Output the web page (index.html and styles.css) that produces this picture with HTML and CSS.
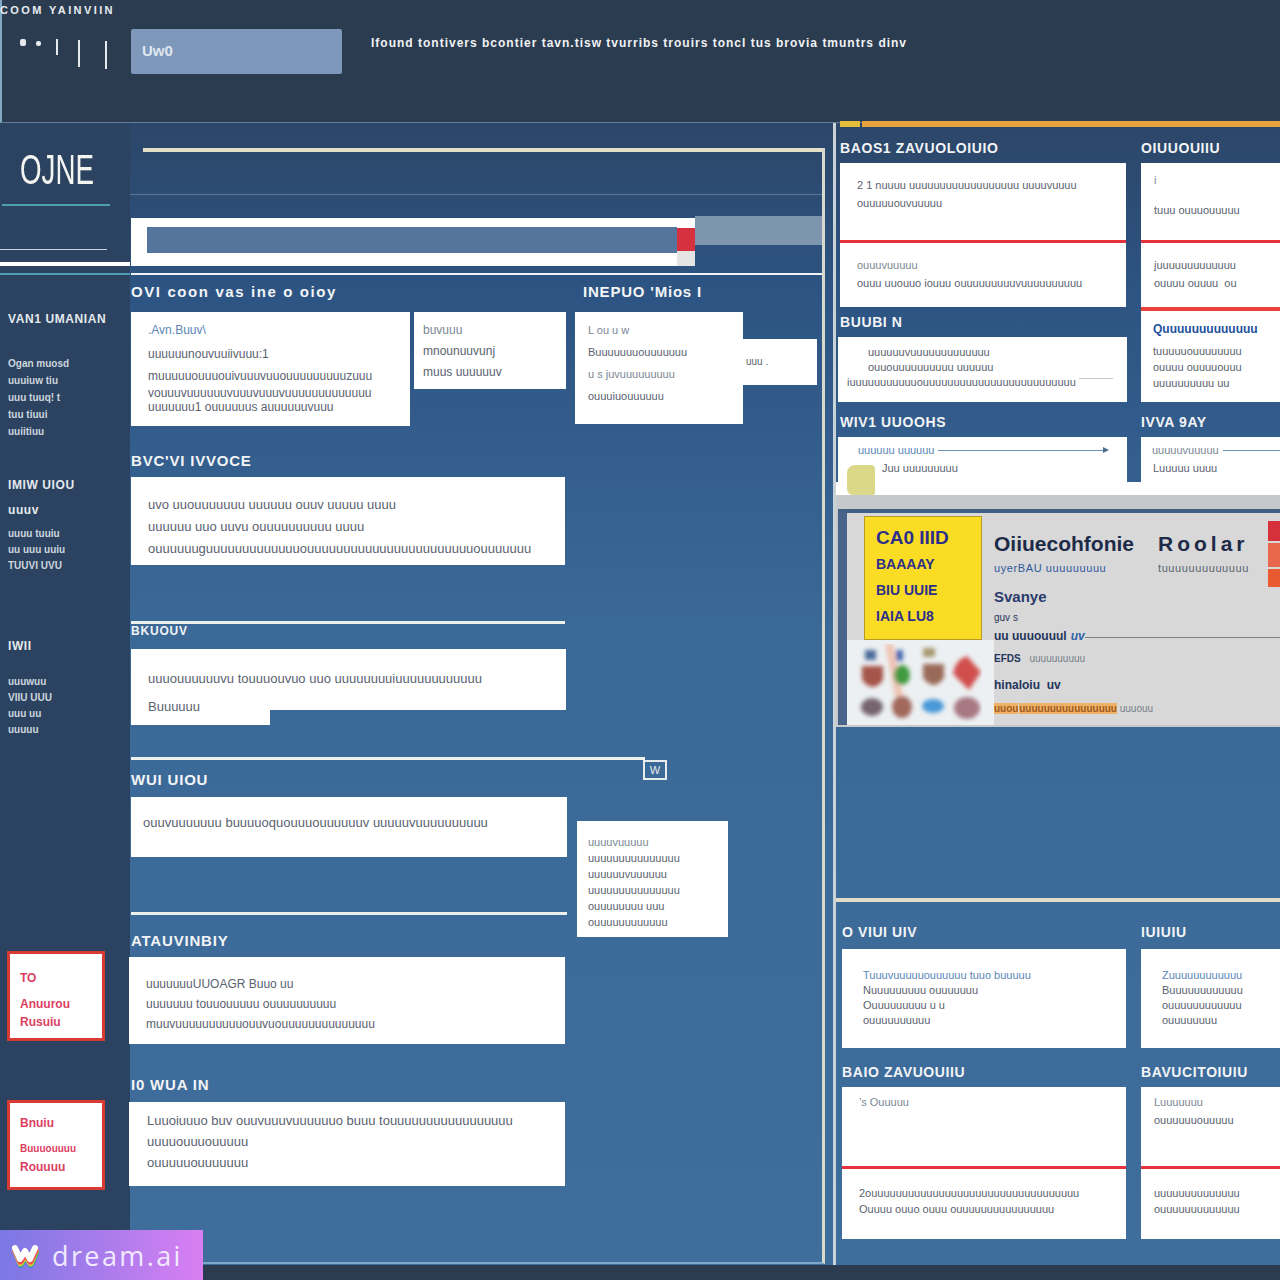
FILE: index.html
```html
<!doctype html>
<html>
<head>
	<title>OJNE</title>
	<meta charset="utf-8">
	<link rel="stylesheet" href="styles.css">
</head>
<body>
<div class="page">

	<div class="header">
		<div class="top_title">COOM YAINVIIN</div>
		<div class="header_row">
			<div class="ticks">
				<span class="dot"></span><span class="dot d2"></span><span class="tick tk1"></span><span class="tick tk2"></span><span class="tick tk3"></span>
			</div>
			<div class="search">Uw0</div>
			<div class="top_nav">Ifound tontivers bcontier tavn.tisw tvurribs trouirs toncl tus brovia tmuntrs dinv</div>
		</div>
	</div>

	<div class="content">

		<!-- left column -->
		<div class="side">
			<div class="logo">OJNE</div>
			<div class="s_rule teal first"></div>
			<div class="s_rule thin"></div>
			<div class="s_rule white"></div>
			<div class="s_rule teal last"></div>

			<div class="s_head sh1">VAN1 UMANIAN</div>
			<ul class="s_list l1">
				<li>Ogan muosd</li>
				<li>uuuiuw tiu</li>
				<li>uuu tuuq! t</li>
				<li>tuu tiuui</li>
				<li>uuiitiuu</li>
			</ul>

			<div class="s_head sh2">IMIW UIOU</div>
			<div class="s_head sh3">uuuv</div>
			<ul class="s_list l2">
				<li>uuuu tuuiu</li>
				<li>uu uuu uuiu</li>
				<li>TUUVI UVU</li>
			</ul>

			<div class="s_head sh4">IWII</div>
			<ul class="s_list l3">
				<li>uuuwuu</li>
				<li>VIIU UUU</li>
				<li>uuu uu</li>
				<li>uuuuu</li>
			</ul>

			<div class="red_box box1">
				<b class="big">TO</b>
				<b>Anuurou</b>
				<b>Rusuiu</b>
			</div>
			<div class="red_box box2">
				<b class="big">Bnuiu</b>
				<b class="sm">Buuuouuuu</b>
				<b>Rouuuu</b>
			</div>
		</div>

		<!-- middle column -->
		<div class="frame">
			<div class="rule_cream"></div>
			<div class="rule_thin"></div>
			<div class="bar_row">
				<div class="bar">
					<div class="bar_fill"></div>
					<div class="bar_tag"></div>
				</div>
				<div class="bar_gray"></div>
			</div>
			<div class="rule_white"></div>

			<div class="sec_head two">
				<span class="h_left">OVI coon vas ine o oioy</span>
				<span>INEPUO 'Mios I</span>
			</div>
			<div class="row">
				<div class="card c11">
					<p class="blue">.Avn.Buuv\</p>
					<p>uuuuuunouvuuiivuuu:1</p>
					<p>muuuuuouuuouivuuuvuuouuuuuuuuuzuuu</p>
					<p>vouuuvuuuuuuvuuuvuuuvuuuuuuuuuuuuu</p>
					<p>uuuuuuu1 ouuuuuus auuuuuuvuuu</p>
				</div>
				<div class="card c12">
					<p class="soft">buvuuu</p>
					<p>mnounuuvunj</p>
					<p>muus uuuuuuv</p>
				</div>
				<div class="card c13">
					<p class="soft">L ou u w</p>
					<p>Buuuuuuuouuuuuuu</p>
					<p class="soft">u s juvuuuuuuuuu</p>
					<p>ouuuiuouuuuuu</p>
				</div>
				<div class="card c14"><p>uuu .</p></div>
			</div>

			<div class="sec_head s2">BVC'VI IVVOCE</div>
			<div class="card c2">
				<p>uvo uuouuuuuuu uuuuuu ouuv uuuuu uuuu</p>
				<p>uuuuuu uuo uuvu ouuuuuuuuuu uuuu</p>
				<p>ouuuuuuguuuuuuuuuuuuuouuuuuuuuuuuuuuuuuuuuuuuouuuuuuu</p>
			</div>

			<div class="rule_short r3"></div>
			<div class="sec_head s3">BKUOUV</div>
			<div class="card c3">
				<p>uuuouuuuuuvu touuuouvuo uuo uuuuuuuuiuuuuuuuuuuuu</p>
				<p>Buuuuuu</p>
			</div>
			<div class="card_tab"></div>

			<div class="rule_box">
				<div class="rule_long"></div>
				<div class="mini_box">W</div>
			</div>
			<div class="sec_head s4">WUI UIOU</div>
			<div class="row flat">
				<div class="card c4">
					<p>ouuvuuuuuuu buuuuoquouuuouuuuuuv uuuuuvuuuuuuuuuu</p>
				</div>
				<div class="card c45">
					<p class="soft">uuuuvuuuuu</p>
					<p>uuuuuuuuuuuuuuu</p>
					<p>uuuuuuvuuuuuu</p>
					<p>uuuuuuuuuuuuuuu</p>
					<p>ouuuuuuuu uuu</p>
					<p>ouuuuuuuuuuuu</p>
				</div>
			</div>

			<div class="rule_short r5"></div>
			<div class="sec_head s5">ATAUVINBIY</div>
			<div class="card c5">
				<p>uuuuuuuUUOAGR Buuo uu</p>
				<p>uuuuuuu touuouuuuu ouuuuuuuuuu</p>
				<p>muuvuuuuuuuuuuouuvuouuuuuuuuuuuuuu</p>
			</div>

			<div class="sec_head s6">I0 WUA IN</div>
			<div class="card c6">
				<p>Luuoiuuuo buv ouuvuuuvuuuuuuo buuu touuuuuuuuuuuuuuuuu</p>
				<p>uuuuouuuouuuuu</p>
				<p>ouuuuuouuuuuuu</p>
			</div>
		</div>

		<!-- right column -->
		<div class="right">
			<div class="orange"><span class="orange_a"></span><span class="orange_b"></span></div>
			<div class="r_top">
				<div class="r_col">
					<div class="r_head">BAOS1 ZAVUOLOIUIO</div>
					<div class="rcard split">
						<div class="half hf_top">
							<p>2 1 nuuuu uuuuuuuuuuuuuuuuuu uuuuvuuuu</p>
							<p>ouuuuuouvuuuuu</p>
						</div>
						<div class="half hf_bot">
							<p class="soft">ouuuvuuuuu</p>
							<p>ouuu uuouuo iouuu ouuuuuuuuuvuuuuuuuuuu</p>
						</div>
					</div>
					<div class="r_head gap1">BUUBI N</div>
					<div class="rcard wide h65">
						<p class="ind">uuuuuuvuuuuuuuuuuuuu</p>
						<p class="ind">ouuouuuuuuuuuu uuuuuu</p>
						<p>iuuuuuuuuuuuouuuuuuuuuuuuuuuuuuuuuuuuu <i class="faint"></i></p>
					</div>
					<div class="r_head gap2">WIV1 UUOOHS</div>
					<div class="rcard wide short">
						<div class="arrow_line"><span class="blue">uuuuuu uuuuuu</span><i></i></div>
						<p class="ind">Juu uuuuuuuuu</p>
					</div>
				</div>
				<div class="r_col">
					<div class="r_head">OIUUOUIIU</div>
					<div class="rcard split thick">
						<div class="half hf_top nar">
							<p class="soft">i</p>
							<p>tuuu ouuuouuuuu</p>
						</div>
						<div class="half hf_bot nar">
							<p>juuuuuuuuuuuuu</p>
							<p>ouuuu ouuuu &nbsp;ou</p>
						</div>
					</div>
					<div class="rcard h91">
						<p class="navy">Quuuuuuuuuuuuu</p>
						<p>tuuuuuouuuuuuuu</p>
						<p>ouuuu ouuuuouuu</p>
						<p>uuuuuuuuuu uu</p>
					</div>
					<div class="r_head gap3">IVVA 9AY</div>
					<div class="rcard short">
						<div class="arrow_line lb"><span class="soft">uuuuuvuuuuu</span><i></i></div>
						<p>Luuuuu uuuu</p>
					</div>
				</div>
			</div>

			<div class="sticky"></div>
			<div class="band"></div>

			<div class="panel">
				<div class="panel_in">
					<div class="panel_left">
						<div class="yellow">
							<b class="y1">CA0 IIID</b>
							<b>BAAAAY</b>
							<b>BIU UUIE</b>
							<b>IAIA LU8</b>
						</div>
						<svg class="blobs" width="125" height="78" viewBox="0 0 125 78">
							<defs><filter id="soft"><feGaussianBlur stdDeviation="2.2"/></filter></defs>
							<g filter="url(#soft)">
								<rect x="8" y="6" width="11" height="10" fill="#4a6a9a"/>
								<rect x="39" y="6" width="7" height="11" fill="#4668b0"/>
								<rect x="66" y="4" width="12" height="9" fill="#a89870"/>
								<path d="M32 0 L44 62" stroke="#eec4b4" stroke-width="8"/>
								<path d="M5 22 h21 v14 q-10 14 -21 0z" fill="#a55448"/>
								<ellipse cx="45" cy="31" rx="8" ry="10" fill="#3f9a3c"/>
								<path d="M66 20 h21 v14 q-10 14 -21 0z" fill="#9a6a58"/>
								<path d="M110 12 L124 28 L112 46 L96 30 Q98 16 110 12z" fill="#d0504e"/>
								<ellipse cx="15" cy="63" rx="11" ry="9" fill="#76656e"/>
								<ellipse cx="45" cy="63" rx="10" ry="11" fill="#a2685c"/>
								<ellipse cx="76" cy="62" rx="11" ry="7" fill="#4a98d8"/>
								<ellipse cx="110" cy="64" rx="13" ry="11" fill="#a87884"/>
							</g>
						</svg>
					</div>
					<div class="panel_text">
						<div class="p_title"><span class="p_a">Oiiuecohfonie</span><span class="p_b">Roolar</span></div>
						<div class="p_sub"><span class="p_a bl">uyerBAU uuuuuuuuu</span><span>tuuuuuuuuuuuuu</span></div>
						<div class="p_bold">Svanye</div>
						<div class="p_tiny">guv s</div>
						<div class="p_line"><span>uu uuuouuul</span><em>uv</em><i></i></div>
						<div class="p_small"><b>EFDS</b> <span>uuuuuuuuuu</span></div>
						<div class="p_hi">hinaloiu &nbsp;uv</div>
						<div class="p_orange"><mark>uuou</mark> <mark class="m2">uuuuuuuuuuuuuuuu</mark> uuuouu</div>
					</div>
					<div class="flag"><span class="f1"></span><span class="f2"></span><span class="f3"></span></div>
				</div>
			</div>

			<div class="rule_lower"></div>

			<div class="r_row heads1">
				<div class="r_head">O VIUI UIV</div>
				<div class="r_head">IUIUIU</div>
			</div>
			<div class="r_row">
				<div class="rcard h99">
					<p class="blue">Tuuuvuuuuuouuuuuu tuuo buuuuu</p>
					<p>Nuuuuuuuuu ouuuuuuu</p>
					<p>Ouuuuuuuuu u u</p>
					<p>ouuuuuuuuuu</p>
				</div>
				<div class="rcard h99">
					<p class="blue">Zuuuuuuuuuuuu</p>
					<p>Buuuuuuuuuuuu</p>
					<p>ouuuuuuuuuuuu</p>
					<p>ouuuuuuuu</p>
				</div>
			</div>
			<div class="r_row heads2">
				<div class="r_head">BAIO ZAVUOUIIU</div>
				<div class="r_head">BAVUCITOIUIU</div>
			</div>
			<div class="r_row">
				<div class="rcard split tall">
					<div class="half low_top">
						<p class="soft">&rsquo;s Ouuuuu</p>
					</div>
					<div class="half low_bot">
						<p>2ouuuuuuuuuuuuuuuuuuuuuuuuuuuuuuuuuu</p>
						<p>Ouuuu ouuo ouuu ouuuuuuuuuuuuuuuu</p>
					</div>
				</div>
				<div class="rcard split tall">
					<div class="half low_top nar">
						<p class="soft">Luuuuuuu</p>
						<p>ouuuuuuouuuuu</p>
					</div>
					<div class="half low_bot nar">
						<p>uuuuuuuuuuuuuu</p>
						<p>ouuuuuuuuuuuuu</p>
					</div>
				</div>
			</div>
		</div>
	</div>

	<!-- watermark -->
	<div class="mark">
		<svg width="30" height="26" viewBox="0 0 30 26">
			<g fill="none" stroke-linecap="round" stroke-linejoin="round" stroke-width="6">
				<path d="M5 8 L10 20 L15 12 L20 20 L25 8" stroke="#3f7de0" transform="translate(1 3)"/>
				<path d="M5 8 L10 20 L15 12 L20 20 L25 8" stroke="#49c45c" transform="translate(1 2)"/>
				<path d="M5 8 L10 20 L15 12 L20 20 L25 8" stroke="#f2c83a" transform="translate(.5 1)"/>
				<path d="M5 8 L10 19 L15 11 L20 19 L25 8" stroke="#ee5050" transform="translate(.5 .5)"/>
				<path d="M5 6 L10 17 L15 9 L20 17 L25 6" stroke="#ffffff"/>
			</g>
		</svg>
		<span>dream.ai</span>
	</div>
</div>
</body>
</html>
```

FILE: styles.css
```css
body{
	margin: 0;
	padding: 0;
	font-family: "Liberation Sans", Arial, sans-serif;
	background: #2c3c50;
}
p{
	margin: 0;
}
ul{
	margin: 0;
	padding: 0;
	list-style: none;
}
.page{
	position: relative;
	width: 1280px;
	height: 1280px;
	overflow: hidden;
	background: #2c3c50;
}

/* header */
.header{
	height: 118px;
	padding-top: 4px;
	border-left: 2px solid #7fa9c4;
	border-bottom: 1px solid #5f7f9c;
	box-sizing: content-box;
}
.top_title{
	height: 12px;
	margin-left: -2px;
	font-size: 11px;
	line-height: 12px;
	font-weight: bold;
	letter-spacing: 2.4px;
	color: #e8edf2;
}
.header_row{
	display: flex;
	align-items: flex-start;
	margin-top: 13px;
}
.ticks{
	display: flex;
	align-items: flex-start;
	width: 129px;
	height: 45px;
	flex: none;
}
.dot{
	width: 6px;
	height: 7px;
	margin: 10px 0 0 18px;
	border-radius: 2px;
	background: #e6eaee;
}
.dot.d2{
	width: 5px;
	height: 5px;
	margin: 12px 0 0 10px;
}
.tick{
	width: 2px;
	background: #e6eaee;
}
.tk1{
	height: 16px;
	margin: 10px 0 0 15px;
}
.tk2{
	height: 27px;
	margin: 11px 0 0 20px;
}
.tk3{
	height: 28px;
	margin: 12px 0 0 25px;
}
.search{
	width: 211px;
	height: 45px;
	flex: none;
	padding-left: 11px;
	box-sizing: border-box;
	background: #7e98bb;
	border-radius: 2px;
	font-size: 15px;
	font-weight: bold;
	line-height: 44px;
	color: #dfe6ee;
}
.top_nav{
	margin: 6px 0 0 29px;
	font-size: 12px;
	font-weight: bold;
	line-height: 16px;
	letter-spacing: 1px;
	color: #f0f2f4;
	white-space: nowrap;
}

/* three columns */
.content{
	display: flex;
	height: 1142px;
	align-items: stretch;
	background: linear-gradient(#2c4668 0, #2d5483 170px, #3a6897 500px, #3f6e9c 1142px);
}

/* left column */
.side{
	width: 130px;
	flex: none;
	background: #2b4360;
	color: #e4e9ee;
}
.logo{
	margin: 22px 0 0 20px;
	height: 50px;
	font-size: 42px;
	line-height: 50px;
	color: #f4f4f0;
	transform: scaleX(0.66);
	transform-origin: left center;
}
.s_rule.teal{
	height: 2px;
	background: #4e9fb4;
}
.s_rule.first{
	width: 108px;
	margin: 9px 0 0 2px;
}
.s_rule.thin{
	width: 107px;
	height: 1px;
	margin-top: 43px;
	background: #c9d6e0;
}
.s_rule.white{
	height: 4px;
	margin-top: 12px;
	background: #fff;
}
.s_rule.last{
	margin-top: 7px;
}
.s_head{
	margin-left: 8px;
	font-size: 12px;
	font-weight: bold;
	line-height: 16px;
	letter-spacing: 0.6px;
	white-space: nowrap;
}
.s_head.sh1{
	margin-top: 36px;
}
.s_list{
	margin-left: 8px;
	font-size: 10px;
	font-weight: bold;
	color: #cdd6df;
	white-space: nowrap;
}
.s_list.l1{
	margin-top: 28px;
	line-height: 17px;
}
.s_head.sh2{
	margin-top: 37px;
}
.s_head.sh3{
	margin-top: 9px;
}
.s_list.l2{
	margin-top: 8px;
	line-height: 16px;
}
.s_head.sh4{
	margin-top: 64px;
}
.s_list.l3{
	margin-top: 20px;
	line-height: 16px;
}
.red_box{
	display: flex;
	flex-direction: column;
	justify-content: center;
	width: 98px;
	height: 90px;
	margin-left: 7px;
	padding: 8px 0 0 10px;
	box-sizing: border-box;
	background: #fff;
	border: 3px solid #d93a34;
	color: #dc3f62;
	font-size: 12px;
	line-height: 18px;
	white-space: nowrap;
}
.red_box .big{
	margin-bottom: 8px;
}
.red_box .sm{
	font-size: 10px;
}
.red_box.box1{
	margin-top: 213px;
}
.red_box.box2{
	margin-top: 59px;
	padding-top: 0;
}

/* middle column */
.frame{
	width: 695px;
	height: 1116px;
	flex: none;
	margin-top: 25px;
	padding-left: 1px;
	box-sizing: border-box;
	border-right: 3px solid #d7d9cc;
	border-bottom: 2px solid #7fa8c8;
}
.rule_cream{
	height: 4px;
	margin-left: 12px;
	background: #e4dfc8;
}
.rule_thin{
	height: 1px;
	margin: 42px 0 0 -1px;
	background: #5d7690;
}
.bar_row{
	display: flex;
	align-items: flex-start;
	height: 48px;
	margin-top: 23px;
}
.bar{
	display: flex;
	width: 564px;
	height: 48px;
	padding: 9px 0 0 16px;
	box-sizing: border-box;
	background: #fff;
}
.bar_fill{
	width: 530px;
	height: 26px;
	background: #56759c;
}
.bar_tag{
	width: 18px;
	height: 39px;
	background: linear-gradient(#fff 0, #fff 1px, #d6313f 1px, #d6313f 24px, #e4e4e4 24px);
}
.bar_gray{
	width: 127px;
	height: 29px;
	margin-top: -2px;
	background: #7d95ae;
}
.rule_white{
	width: 691px;
	height: 2px;
	margin-top: 7px;
	background: #eef3f6;
}
.sec_head{
	font-size: 15px;
	font-weight: bold;
	line-height: 18px;
	letter-spacing: 0.8px;
	color: #f2f4f6;
	white-space: nowrap;
}
.sec_head.two{
	display: flex;
	margin: 8px 0 11px;
}
.h_left{
	width: 452px;
	letter-spacing: 1.6px;
}
.row{
	display: flex;
	align-items: flex-start;
}
.card{
	box-sizing: border-box;
	background: #fff;
	color: #5a6270;
	font-size: 12px;
	white-space: nowrap;
	overflow: hidden;
}
.blue{
	color: #5a86b8;
}
.soft{
	color: #7a8896;
}
.c11{
	width: 279px;
	height: 114px;
	padding: 10px 0 0 17px;
	line-height: 16px;
}
.c11 p:nth-child(2){
	margin-top: 8px;
}
.c11 p:nth-child(3){
	margin-top: 6px;
}
.c11 p:nth-child(4){
	margin-top: 1px;
}
.c11 p:nth-child(5){
	margin-top: -2px;
}
.c12{
	width: 152px;
	height: 77px;
	margin-left: 4px;
	padding: 8px 0 0 9px;
	line-height: 21px;
}
.c13{
	width: 168px;
	height: 112px;
	margin-left: 9px;
	padding: 7px 0 0 13px;
	line-height: 22px;
	font-size: 11px;
}
.c14{
	width: 74px;
	height: 46px;
	margin-top: 27px;
	padding: 17px 0 0 3px;
	font-size: 10px;
}
.sec_head.s2{
	margin: 26px 0 7px;
}
.c2{
	width: 434px;
	height: 88px;
	padding: 17px 0 0 17px;
	line-height: 22px;
	font-size: 13px;
}
.rule_short{
	width: 434px;
	height: 3px;
	background: #eef0ee;
}
.rule_short.r3{
	margin-top: 56px;
}
.sec_head.s3{
	margin-bottom: 11px;
	font-size: 12px;
	line-height: 14px;
}
.c3{
	width: 435px;
	height: 61px;
	padding: 16px 0 0 17px;
	line-height: 28px;
	font-size: 13px;
	overflow: visible;
}
.card_tab{
	width: 139px;
	height: 15px;
	background: #fff;
}
.rule_box{
	display: flex;
	align-items: flex-start;
	height: 14px;
	margin-top: 32px;
}
.rule_long{
	width: 514px;
	height: 3px;
	background: #eef0ee;
}
.mini_box{
	width: 24px;
	height: 20px;
	margin: 3px 0 0 -2px;
	box-sizing: border-box;
	border: 2px solid #e8ecec;
	font-size: 11px;
	line-height: 16px;
	text-align: center;
	color: #e8ecec;
}
.sec_head.s4{
	margin-bottom: 8px;
}
.row.flat{
	height: 60px;
}
.c4{
	width: 436px;
	height: 60px;
	padding: 17px 0 0 12px;
	line-height: 18px;
	font-size: 13px;
}
.c45{
	width: 151px;
	height: 116px;
	margin: 24px 0 -80px 10px;
	padding: 13px 0 0 11px;
	line-height: 16px;
	font-size: 11px;
}
.rule_short.r5{
	width: 436px;
	margin-top: 55px;
}
.sec_head.s5{
	margin: 17px 0 7px;
}
.c5{
	width: 436px;
	height: 87px;
	margin-left: -2px;
	padding: 17px 0 0 17px;
	line-height: 20px;
}
.sec_head.s6{
	margin: 32px 0 8px;
}
.c6{
	width: 436px;
	height: 84px;
	margin-left: -2px;
	padding: 8px 0 0 18px;
	line-height: 21px;
	font-size: 13px;
}

/* right column */
.right{
	position: relative;
	width: 447px;
	flex: none;
	margin-left: 8px;
	border-left: 3px solid #c9d2d6;
	color: #f2f4f6;
}
.orange{
	display: flex;
	height: 6px;
	margin: -2px 0 0 4px;
}
.orange_a{
	width: 20px;
	background: #e6be3c;
}
.orange_b{
	flex: 1;
	margin-left: 2px;
	background: #e8a33c;
}
.r_top{
	display: flex;
	height: 342px;
	margin-top: 13px;
	padding-left: 4px;
}
.r_col{
	width: 286px;
	flex: none;
}
.r_col + .r_col{
	margin-left: 15px;
}
.r_head{
	height: 17px;
	font-size: 14px;
	font-weight: bold;
	line-height: 17px;
	letter-spacing: 0.6px;
	white-space: nowrap;
	color: #f2f4f6;
}
.r_head + .rcard{
	margin-top: 6px;
}
.rcard{
	box-sizing: border-box;
	background: #fff;
	color: #5a6270;
	font-size: 11px;
	line-height: 18px;
	white-space: nowrap;
	overflow: hidden;
}
.split{
	height: 144px;
	display: flex;
	flex-direction: column;
	overflow: visible;
}
.half{
	overflow: hidden;
	padding-left: 17px;
}
.half.nar{
	padding-left: 13px;
}
.hf_top{
	height: 80px;
	padding-top: 13px;
	box-sizing: border-box;
	border-bottom: 3px solid #e5323e;
}
.hf_top.nar{
	padding-top: 8px;
}
.hf_top.nar p + p{
	margin-top: 12px;
}
.hf_bot{
	padding-top: 13px;
}
.thick{
	height: 148px;
	border-bottom: 4px solid #e8403a;
}
.gap1{
	margin-top: 7px;
}
.gap2,.gap3{
	margin-top: 12px;
}
.wide{
	width: 289px;
	margin-left: -2px;
}
.h65{
	height: 65px;
	padding: 8px 0 0 9px;
	line-height: 15px;
}
.faint{
	display: inline-block;
	width: 34px;
	height: 1px;
	vertical-align: 7px;
	background: #c2ccd4;
}
.ind{
	padding-left: 21px;
}
.short{
	height: 45px;
}
.r_col .h91{
	height: 91px;
	padding: 10px 0 0 12px;
	line-height: 16px;
}
.navy{
	margin-bottom: 6px;
	color: #22509c;
	font-weight: bold;
	font-size: 12px;
}
.arrow_line{
	display: flex;
	align-items: center;
	height: 24px;
	padding: 2px 18px 0 20px;
	box-sizing: border-box;
}
.arrow_line i{
	flex: 1;
	height: 1px;
	margin-left: 4px;
	background: #6a90b4;
}
.arrow_line::after{
	content: "";
	border-left: 6px solid #4c6c8c;
	border-top: 3px solid transparent;
	border-bottom: 3px solid transparent;
}
.arrow_line.lb{
	padding: 2px 0 0 11px;
}
.arrow_line.lb::after{
	display: none;
}
.short > p{
	padding-left: 12px;
	line-height: 14px;
}
.short > .ind{
	padding-left: 44px;
}
.sticky{
	position: absolute;
	left: 11px;
	top: 342px;
	width: 28px;
	height: 30px;
	background: #dcd88a;
	border-radius: 8px 4px 2px 6px;
	z-index: 2;
}
.band{
	height: 13px;
	background: #fff;
}
.panel{
	padding: 14px 0 2px 2px;
	background: #c6c9cb;
}
.panel_in{
	position: relative;
	display: flex;
	height: 212px;
	border-top: 4px solid #3f5f85;
	border-left: 9px solid #48648a;
	background: #d8d8d8;
	overflow: hidden;
}
.panel_left{
	width: 147px;
	flex: none;
	padding: 0 0 0 10px;
	box-sizing: border-box;
	background: linear-gradient(#d8d8d8 0, #d8d8d8 127px, #ecf0f2 127px);
}
.yellow{
	display: flex;
	flex-direction: column;
	width: 118px;
	height: 124px;
	margin: 3px 0 0 7px;
	padding: 8px 0 0 11px;
	box-sizing: border-box;
	background: #fbdc24;
	border: 1px solid #b89a28;
	color: #2c2f8c;
	font-size: 14px;
	line-height: 26px;
	white-space: nowrap;
}
.yellow .y1{
	font-size: 19px;
}
.blobs{
	display: block;
	margin-top: 4px;
}
.panel_text{
	padding-top: 18px;
	color: #24345a;
	white-space: nowrap;
}
.p_title{
	font-size: 21px;
	font-weight: bold;
	line-height: 26px;
	color: #1d2a48;
}
.p_a{
	display: inline-block;
	width: 164px;
}
.p_b{
	letter-spacing: 4px;
}
.p_sub{
	font-size: 11px;
	line-height: 22px;
	letter-spacing: 0.6px;
	color: #5a6470;
}
.p_a.bl{
	color: #30579c;
}
.p_bold{
	margin-top: 5px;
	font-size: 15px;
	font-weight: bold;
	line-height: 26px;
	color: #2a3a6c;
}
.p_tiny{
	font-size: 10px;
	line-height: 16px;
}
.p_line{
	display: flex;
	align-items: center;
	font-size: 12px;
	font-weight: bold;
	line-height: 20px;
}
.p_line em{
	margin-left: 4px;
	color: #3062a4;
}
.p_line i{
	width: 200px;
	height: 1px;
	background: #7a7f88;
	margin-top: 3px;
}
.p_small{
	margin-top: 3px;
	font-size: 10px;
	line-height: 20px;
}
.p_small span{
	margin-left: 6px;
	color: #77808c;
}
.p_hi{
	margin-top: 6px;
	font-size: 12px;
	font-weight: bold;
	line-height: 20px;
}
.p_orange{
	margin-top: 7px;
	font-size: 10px;
	line-height: 14px;
	color: #77808c;
}
.p_orange mark{
	background: #edb266;
	color: #a25a20;
	font-weight: bold;
}
.p_orange .m2{
	margin-left: -2px;
}
.flag{
	position: absolute;
	right: 0;
	top: 8px;
	display: flex;
	flex-direction: column;
	width: 15px;
	gap: 2px;
}
.flag span{
	display: block;
}
.f1{
	height: 20px;
	background: #d6303c;
}
.f2{
	height: 24px;
	background: #e8664c;
}
.f3{
	height: 18px;
	background: #e85a30;
}
.rule_lower{
	height: 4px;
	margin-top: 171px;
	background: #e2ddc8;
}
.r_row{
	display: flex;
	padding-left: 6px;
}
.r_row > *{
	width: 284px;
	flex: none;
}
.r_row > * + *{
	margin-left: 15px;
}
.heads1,.heads2{
	height: 17px;
}
.heads1{
	margin: 22px 0 8px;
}
.heads2{
	margin: 16px 0 6px;
}
.h99{
	height: 99px;
	padding: 19px 0 0 21px;
	line-height: 15px;
}
.tall{
	height: 152px;
}
.low_top{
	height: 82px;
	padding-top: 6px;
	box-sizing: border-box;
	border-bottom: 3px solid #e5323e;
}
.low_bot{
	padding-top: 16px;
	line-height: 16px;
}

/* watermark */
.mark{
	position: absolute;
	left: 0;
	bottom: 0;
	display: flex;
	align-items: center;
	width: 203px;
	height: 50px;
	padding-left: 10px;
	box-sizing: border-box;
	background: linear-gradient(90deg, #7a78e4, #d87ff2);
}
.mark span{
	margin-left: 12px;
	font-family: "Open Sans", sans-serif;
	font-size: 27px;
	letter-spacing: 2.4px;
	color: #f1eaff;
}
```
